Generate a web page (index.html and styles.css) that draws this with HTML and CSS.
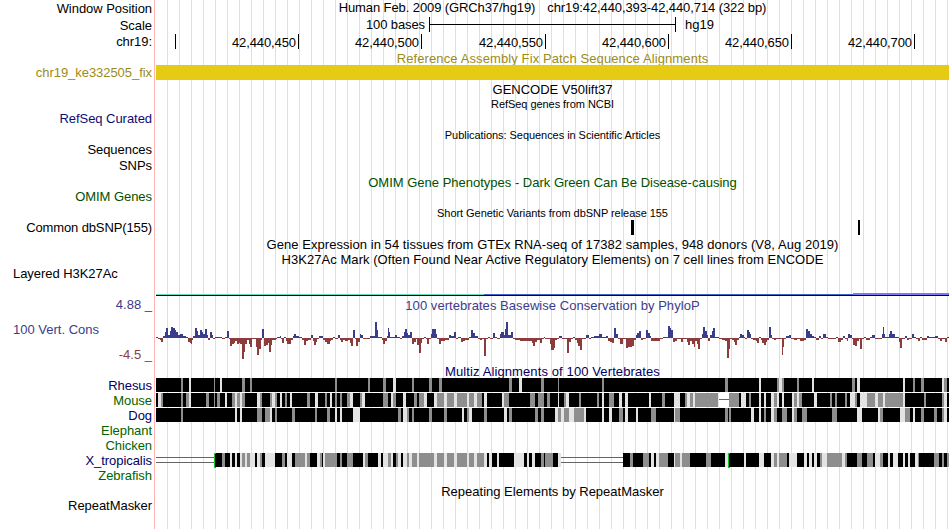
FILE: index.html
```html
<!DOCTYPE html>
<html lang="en">
<head>
<meta charset="utf-8">
<title>chr19:42,440,393-42,440,714</title>
<link rel="stylesheet" href="styles.css">
</head>
<body>
<main class="browser">
  <section class="row h17"><div class="label">Window Position</div><div class="title pos"><span>Human Feb. 2009 (GRCh37/hg19)</span><span>chr19:42,440,393-42,440,714 (322 bp)</span></div></section>
  <section class="row h16"><div class="label low">Scale</div><div class="scale"><span class="scale-size">100 bases</span><i class="scale-bar"></i><span>hg19</span></div></section>
  <section class="row h18"><div class="label">chr19:</div><div class="ruler"><span></span><span>42,440,450</span><span>42,440,500</span><span class="wide">42,440,550</span><span>42,440,600</span><span>42,440,650</span><span>42,440,700</span></div></section>
  <section class="row h14"><div></div><div class="title low olive loose">Reference Assembly Fix Patch Sequence Alignments</div></section>
  <section class="row h15"><div class="label olive">chr19_ke332505_fix</div><div class="patch"></div></section>
  <section class="row h18"><div></div><div class="title low">GENCODE V50lift37</div></section>
  <section class="row h13"><div></div><div class="title small">RefSeq genes from NCBI</div></section>
  <section class="row h15"><div class="label navy">RefSeq Curated</div></section>
  <section class="row h17"><div></div><div class="title low small">Publications: Sequences in Scientific Articles</div></section>
  <section class="row h14"><div class="label">Sequences</div></section>
  <section class="row h17"><div class="label">SNPs</div></section>
  <section class="row h16"><div></div><div class="title low green">OMIM Gene Phenotypes - Dark Green Can Be Disease-causing</div></section>
  <section class="row h14"><div class="label green">OMIM Genes</div></section>
  <section class="row h16"><div></div><div class="title low small">Short Genetic Variants from dbSNP release 155</div></section>
  <section class="row h15"><div class="label tight">Common dbSNP(155)</div><svg id="snps" class="plot" width="793" height="15" viewBox="156 0 793 15"></svg></section>
  <section class="row h17"><div></div><div class="title low open">Gene Expression in 54 tissues from GTEx RNA-seq of 17382 samples, 948 donors (V8, Aug 2019)</div></section>
  <section class="row h15"><div></div><div class="title open">H3K27Ac Mark (Often Found Near Active Regulatory Elements) on 7 cell lines from ENCODE</div></section>
  <section class="row h31"><div class="label left">Layered H3K27Ac</div><svg id="h3k" class="plot" width="793" height="31" viewBox="156 267 793 31"></svg></section>
  <section class="row h65">
    <div class="axis"><span class="max">4.88 _</span><span class="name">100 Vert. Cons</span><span class="min">-4.5 _</span></div>
    <div class="wiggle"><div class="title indigo open">100 vertebrates Basewise Conservation by PhyloP</div><svg id="cons" class="plot" width="793" height="50" viewBox="156 313 793 50"></svg></div>
  </section>
  <section class="row h15"><div></div><div class="title low navy2 loose">Multiz Alignments of 100 Vertebrates</div></section>
  <section class="row h15"><div class="label navy2">Rhesus</div><svg id="rhesus" class="plot" width="793" height="15" viewBox="156 0 793 15"></svg></section>
  <section class="row h15"><div class="label green2">Mouse</div><svg id="mouse" class="plot" width="793" height="15" viewBox="156 0 793 15"></svg></section>
  <section class="row h15"><div class="label navy2">Dog</div><svg id="dog" class="plot" width="793" height="15" viewBox="156 0 793 15"></svg></section>
  <section class="row h15"><div class="label green2">Elephant</div></section>
  <section class="row h15"><div class="label green2">Chicken</div></section>
  <section class="row h15"><div class="label navy2">X_tropicalis</div><svg id="xtrop" class="plot" width="793" height="15" viewBox="156 0 793 15"></svg></section>
  <section class="row h15"><div class="label green2">Zebrafish</div></section>
  <section class="row h15"><div></div><div class="title low">Repeating Elements by RepeatMasker</div></section>
  <section class="row h15"><div class="label">RepeatMasker</div></section>
</main>
<script src="tracks.js"></script>
</body>
</html>
```
FILE: styles.css
```css
body {
  margin: 0;
  background: #fff;
  color: #000;
  font-family: "Liberation Sans", Arial, sans-serif;
  font-size: 13px;
}
.browser {
  box-sizing: border-box;
  width: 949px;
  height: 529px;
  overflow: hidden;
  background:
    linear-gradient(#ffb4b4, #ffb4b4) 154px 0 / 1px 100% no-repeat,
    repeating-linear-gradient(90deg, #dcdcf8 0 1px, transparent 1px 12px) 167px 0 / 782px 100% no-repeat;
}
.row {
  display: grid;
  grid-template-columns: 152px 793px;
  column-gap: 4px;
  white-space: pre;
}
.h13 { height: 13px; line-height: 13px; }
.h14 { height: 14px; line-height: 14px; }
.h15 { height: 15px; line-height: 15px; }
.h16 { height: 16px; line-height: 16px; }
.h17 { height: 17px; line-height: 17px; }
.h18 { height: 18px; line-height: 18px; }
.h31 { height: 31px; line-height: 14px; }
.h65 { height: 65px; line-height: 15px; }
.label { text-align: right; letter-spacing: -0.05px; }
.label.tight { letter-spacing: -0.12px; }
.left { text-align: left; padding-left: 13px; }
.title { text-align: center; }
.low { padding-top: 1px; }
.loose { letter-spacing: 0.11px; }
.open { letter-spacing: 0.05px; }
.small { font-size: 11px; letter-spacing: -0.05px; }
.pos {
  display: flex;
  justify-content: center;
  gap: 12px;
  line-height: 15px;
  letter-spacing: -0.1px;
}
.olive { color: #9c8b16; }
.navy { color: #0c0c78; }
.navy2 { color: #000064; }
.green { color: #005000; }
.green2 { color: #006400; }
.indigo { color: #3c3c8c; }
.plot { display: block; shape-rendering: crispEdges; }
.patch { background: #e6cb15; }

.scale {
  display: grid;
  grid-template-columns: 269px 247px auto;
  column-gap: 4px;
  align-items: start;
}
.scale-size { text-align: right; letter-spacing: -0.1px; }
.scale-bar {
  box-sizing: border-box;
  height: 15px;
  border: solid #000;
  border-width: 0 1px;
  background: linear-gradient(#000, #000) 0 7px / 100% 1px no-repeat;
}
.scale span:last-child { padding-left: 5px; }

.ruler { display: flex; align-items: flex-start; padding-top: 1px; }
.ruler span {
  box-sizing: border-box;
  width: 123px;
  height: 15px;
  padding-right: 2px;
  border-right: 1px solid #000;
  text-align: right;
  letter-spacing: -0.1px;
}
.ruler span:first-child { width: 20px; }
.ruler .wide { width: 124px; }

.axis {
  display: flex;
  flex-direction: column;
  justify-content: space-between;
  height: 63px;
  line-height: 13px;
}
.axis .max { color: #3c3c8c; text-align: right; }
.axis .name { color: #3c3c8c; padding-left: 13px; }
.axis .min { color: #8c3c3c; text-align: right; }
```
FILE: tracks.js
```js
const NS = "http://www.w3.org/2000/svg";
const GRAY = "#8e8e8e", LIGHT = "#e3e3e3", BLACK = "#000";

function rect(svg, x, y, w, h, fill) {
  const r = document.createElementNS(NS, "rect");
  r.setAttribute("x", x);
  r.setAttribute("y", y);
  r.setAttribute("width", w);
  r.setAttribute("height", h);
  r.setAttribute("fill", fill);
  svg.appendChild(r);
}

// Common variants
const snps = document.getElementById("snps");
rect(snps, 631, 0, 3, 15, BLACK);
rect(snps, 858, 0, 2, 15, BLACK);

// H3K27Ac signal
const h3k = document.getElementById("h3k");
rect(h3k, 156, 294, 328, 1, "#64dcbe");
rect(h3k, 484, 294, 369, 1, "#3c64c8");
rect(h3k, 853, 293, 96, 2, "#7878f8");
rect(h3k, 156, 295, 793, 1, "#0c0020");

// PhyloP scores: "start height" pairs, each running up to the next start
const scores = `156 1 158 -1 160 -2 161 -4 163 2 165 6 166 10 168 3 170 7 171 11 173 10 175 8 176 6 178 3 180 4 183 2 186 1
188 -4 190 -5 191 -6 192 -2 193 2 195 10 197 7 198 3 200 8 202 6 203 4 205 9 207 3 208 -2 210 6 212 3 213 -1 215 1 222 -1 225 1 227 7
229 -1 230 -8 232 -6 234 -5 235 -3 237 -6 239 -5 240 -6 242 -21 244 -14 245 -6 247 -2 249 -6 250 -9 252 -1 256 -9 257 -17 259 -11 261 -2
262 9 264 -8 266 -7 268 -5 269 -14 271 -7 272 -2 276 -1 277 1 280 2 281 -1 282 -5 284 1 286 -3 287 -6 291 -2 293 2 294 4 296 2 299 1
302 -2 304 -7 306 -3 308 -2 311 3 313 -3 314 -7 316 -4 317 -1 319 2 323 -2 325 -4 327 -6 330 -3 331 -2 333 1 335 -1 338 3 340 -2 341 -4
343 -2 345 -3 348 -2 350 -5 351 -8 353 8 355 -1 356 -8 358 -4 360 4 361 3 363 -1 370 2 375 16 377 8 378 1 382 -2 383 -6 385 -3 387 2
388 10 389 6 390 1 395 3 397 1 400 -1 402 2 404 6 405 9 407 5 408 3 410 6 412 -6 414 -4 416 -1 417 -7 419 -15 421 -5 422 -1 424 1
426 -1 427 -6 429 -1 431 4 432 9 436 4 437 -1 439 -6 441 -3 445 -2 449 3 451 2 454 6 456 -1 458 1 461 -4 463 -3 465 -2 469 1 471 8
473 5 475 2 478 -1 480 -2 482 -1 484 -18 486 -1 488 1 490 -1 493 5 495 1 497 -1 500 4 501 6 504 3 505 9 506 16 508 3 511 6 513 -1
515 -2 520 -3 532 -5 533 -8 535 -4 537 -2 540 -5 542 -1 544 1 545 -1 550 -6 551 -12 554 -10 555 -2 557 -1 559 2 562 -1 567 -15 569 -4
571 -1 573 1 575 -2 577 -5 578 -8 580 -12 582 -1 586 3 589 -1 591 1 594 2 599 4 602 1 606 2 608 -3 610 -4 612 -5 614 10 616 4 618 -1
620 -6 623 -1 626 -10 628 -9 632 -8 634 -2 636 3 637 5 639 7 641 -2 643 -1 646 8 648 5 650 2 651 -3 660 -1 663 1 668 12 670 10 671 8
673 -4 675 -3 677 -1 681 -4 683 -1 687 -4 688 -7 690 -3 692 -6 694 -9 695 -3 697 -6 698 -11 700 -1 702 4 703 11 705 7 707 3 708 -3
710 3 712 7 713 10 715 1 719 -1 722 -2 725 -3 727 -20 729 -11 730 -1 732 -2 734 -4 735 -7 737 -2 739 1 740 4 742 3 744 1 745 -1 747 8
749 6 750 4 751 -1 753 -2 756 -3 757 -5 759 1 761 -2 762 -5 764 -7 766 -4 767 -2 769 11 771 3 772 -1 774 -2 776 -1 782 -17 783 -9
784 -1 786 2 789 3 791 -1 794 -2 797 -1 800 -3 804 -2 806 9 808 7 810 4 812 2 814 1 816 -2 819 2 821 -1 823 4 826 1 828 -1 836 1
838 -4 841 -2 843 2 845 -1 847 -3 848 4 850 3 852 -1 853 -7 855 -8 857 -3 859 -1 860 -11 862 -1 864 1 866 -2 870 1 872 3 875 -1
882 4 883 11 884 4 885 1 889 4 890 7 892 4 895 1 899 -4 900 -10 902 -1 905 2 907 -2 909 -1 912 4 914 1 916 -1 918 -3 920 1 922 -2
927 2 929 1 935 2 938 -1 940 -3 942 -1 945 -4 947 1`.split(/\s+/).map(Number);
const cons = document.getElementById("cons");
for (let i = 0; i < scores.length; i += 2) {
  const x = scores[i], v = scores[i + 1];
  const w = (i + 2 < scores.length ? scores[i + 2] : 949) - x;
  if (v > 0) rect(cons, x, 338 - v, w, v, "#3c3c8c");
  else rect(cons, x, 338, w, -v, "#8c3c3c");
}

// Alignment rows: black blocks crossed by weaker columns, "g" or "l" + start-end
function alignment(id, blocks, columns) {
  const svg = document.getElementById(id);
  for (const [a, b] of blocks) rect(svg, a, 0, b - a, 14, BLACK);
  for (const c of columns.split(/\s+/)) {
    const [a, b] = c.slice(1).split("-").map(Number);
    rect(svg, a, 0, b - a, 14, { g: GRAY, l: LIGHT, w: "#fff" }[c[0]]);
  }
  return svg;
}

alignment("rhesus", [[156, 949]], `g181-183 l189-191 g214-215 l220-222 g242-245 g250-252 g335-337 g368-370 g383-386 l393-396 g412-414
g429-432 g439-442 g509-512 l519-522 g541-544 g558-559 g602-604 g725-728 l759-761 g777-779 l779-782 g782-784 g797-799 l812-814
g852-855 l857-860 l903-905 g913-915 g921-924 l942-944 g944-947`);

const mouse = alignment("mouse", [[156, 949]], `l158-161 g161-163 g181-183 g186-189 l189-191 g206-209 g214-215 g217-220 l225-227 g232-235 l235-237
g237-240 l240-242 g242-245 l257-260 g260-262 g270-272 l272-275 g275-277 l280-282 g285-287 l290-292 g307-310 l315-318 g325-327
l330-332 g335-337 g340-342 g347-350 l350-353 g360-362 l362-365 g383-388 l391-393 g393-396 l403-406 g414-417 g419-424 l424-427
l434-437 g437-444 l444-447 g447-454 l454-457 g457-467 l467-469 g469-474 l474-477 g477-482 l484-487 l502-504 g504-509 g530-535
g538-544 g547-550 l558-559 g564-566 l566-569 g579-581 g597-599 l602-604 g609-614 l619-622 l625-628 l649-651 g662-665 l674-680
g685-687 l687-690 g690-693 l693-695 g695-718 l718-719 w719-729 g729-739 l741-746 g749-751 l759-761 l764-766 l771-774 g774-777
l777-779 l782-784 l792-794 g794-797 l797-799 g799-802 l814-817 g830-832 g835-837 g845-847 l850-855 g855-857 l860-867 g867-875
l875-878 g878-883 l883-885 g885-903 l903-905 g924-926 g942-944 l944-947`);
rect(mouse, 719, 6, 10, 1, "#646464");

alignment("dog", [[156, 949]], `g181-183 l235-237 l240-242 g257-262 g265-270 l270-272 g275-277 g292-295 g315-317 g327-330 l335-337 l340-342
l353-360 g398-401 l403-407 g407-409 g412-414 g429-432 g444-447 l462-464 g467-469 l469-472 g484-487 l504-507 g509-512 g535-538
g541-544 l555-558 g558-561 l561-564 g564-569 l569-574 g574-584 l584-586 l602-604 l609-612 g619-623 l625-628 l636-638 g651-656
l674-675 g675-680 g725-728 g729-731 l751-754 l759-761 g764-766 l771-774 g774-777 g782-787 l792-794 g794-797 g802-807 g832-837
l857-862 l878-880 g880-883 l900-905 g905-910 l913-915 g921-924 g934-937 g942-944 l944-947`);

const xtrop = alignment("xtrop", [[215, 561], [623, 949]], `g222-225 l230-232 l235-237 l240-242 g242-245 l245-247 g247-250 l250-255 l257-260 g260-262
l265-275 g282-285 l287-292 g295-305 l305-307 g307-310 l317-320 g320-322 l323-325 g325-337 g340-342 g347-353 l363-365 g365-368
l378-381 l383-388 g388-391 l391-393 g396-398 l398-401 l403-407 g407-409 l409-412 g412-417 l417-419 g419-434 l434-437 g437-444
l444-447 g447-454 l454-457 g457-467 l467-469 g469-474 l474-477 g477-484 l484-487 l489-492 l497-499 l514-524 l527-529 l532-535
g541-544 g545-553 l558-561 g630-633 g643-649 l651-654 l656-659 g659-668 l674-675 g675-680 l680-682 g682-690 g706-711 l725-728
l744-746 l759-764 l771-774 g774-777 l777-779 g779-787 l789-797 l804-807 l809-812 l814-817 g820-822 l822-827 g827-842 l842-845
g845-847 g857-862 g867-873 l875-880 g880-883 l888-890 l893-898 l903-905 l908-910 l915-918 g918-919 g934-939 g942-944 g947-949`);
for (const [a, b] of [[156, 214], [561, 623]]) {
  rect(xtrop, a, 4, b - a, 1, "#646464");
  rect(xtrop, a, 9, b - a, 1, "#646464");
}
for (const x of [214, 728]) {
  rect(xtrop, x, 0, 1, 15, "#14c828");
  rect(xtrop, x, 0, 2, 1, "#14c828");
  rect(xtrop, x, 14, 2, 1, "#14c828");
}
```
